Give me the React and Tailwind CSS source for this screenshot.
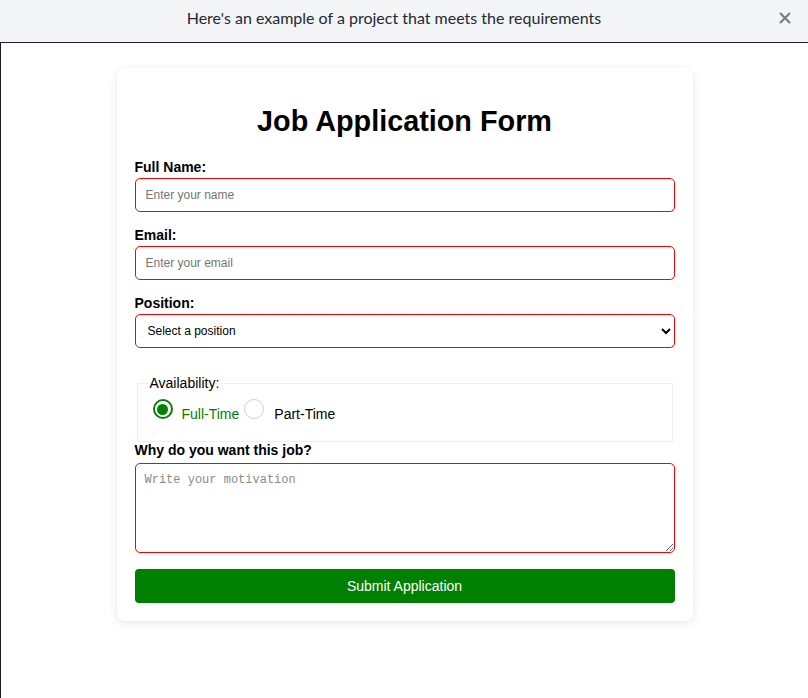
import { useState } from "react";

export default function App() {
  const [availability, setAvailability] = useState("full");

  return (
    <div className="min-h-[698px] bg-white font-['Liberation_Sans',Arial,sans-serif] text-black">
      {/* ── Banner ── */}
      <div className="relative flex h-[43px] items-center justify-center border-b border-[#1e1b3a] bg-[#f3f4f6] pb-[6px] pr-[20px] font-['Lato',sans-serif] text-[16px] text-[#1f2937]">
        Here's an example of a project that meets the requirements
        <button className="absolute right-[17px] top-[12px] h-[12px] w-[12px] text-[#7c7c8c]">
          <svg viewBox="0 0 12 12" className="h-[12px] w-[12px]" fill="none" stroke="currentColor" strokeWidth="2.2">
            <path d="M1 1 L11 11 M11 1 L1 11" />
          </svg>
        </button>
      </div>

      <div className="min-h-[655px] border-l border-[#1e1b3a] pt-[25px]">
        {/* ── Card ── */}
        <form
          className="mx-auto w-[576px] rounded-[8px] bg-white p-[18px] shadow-[0_2px_10px_rgba(0,0,0,0.1)]"
          onSubmit={(e) => e.preventDefault()}
        >
          <h1 className="mb-[20px] mt-[19px] text-center text-[28.8px] font-bold leading-[32px]">
            Job Application Form
          </h1>

          <label className="block text-[14px] font-bold leading-[21px]">Full Name:</label>
          <input
            type="text"
            placeholder="Enter your name"
            className="mb-[13px] block h-[34px] w-full rounded-[5px] border border-[#ff0000] px-[10px] text-[12px] outline-none placeholder:text-[#757575]"
          />

          <label className="block text-[14px] font-bold leading-[21px]">Email:</label>
          <input
            type="email"
            placeholder="Enter your email"
            className="mb-[13px] block h-[34px] w-full rounded-[5px] border border-[#ff0000] px-[10px] text-[12px] outline-none placeholder:text-[#757575]"
          />

          <label className="block text-[14px] font-bold leading-[21px]">Position:</label>
          <select className="block h-[34px] w-full rounded-[5px] border border-[#ff0000] pl-[8px] pr-[4px] text-[12px] outline-none">
            <option>Select a position</option>
            <option>Developer</option>
            <option>Designer</option>
          </select>

          {/* ── Availability ── */}
          <fieldset className="mx-[2px] mt-[27px] border border-[#eeeeee] pb-[19px] pl-[10px] pt-[4px]">
            <legend className="px-[2px] text-[14px] leading-[17px]">Availability:</legend>
            <div className="text-[14px] leading-[16px]">
              <label className="cursor-pointer" onClick={() => setAvailability("full")}>
                {availability === "full" ? (
                  <span className="ml-[5px] mr-[9px] mt-[3px] inline-block h-[20px] w-[20px] rounded-full border-[2px] border-[#0b7d0b] p-[2.5px]">
                    <span className="block h-full w-full rounded-full bg-[#008000]" />
                  </span>
                ) : (
                  <span className="ml-[5px] mr-[9px] mt-[3px] inline-block h-[20px] w-[20px] rounded-full border border-[#cfcfcf] bg-white" />
                )}
                <span className={availability === "full" ? "text-[#008000]" : "text-black"}>Full-Time</span>
              </label>
              <label className="cursor-pointer" onClick={() => setAvailability("part")}>
                {availability === "part" ? (
                  <span className="ml-[5px] mr-[10px] mt-[3px] inline-block h-[20px] w-[20px] rounded-full border-[2px] border-[#0b7d0b] p-[2.5px]">
                    <span className="block h-full w-full rounded-full bg-[#008000]" />
                  </span>
                ) : (
                  <span className="ml-[5px] mr-[10px] mt-[3px] inline-block h-[20px] w-[20px] rounded-full border border-[#cfcfcf] bg-white" />
                )}
                <span className={availability === "part" ? "text-[#008000]" : "text-black"}>Part-Time</span>
              </label>
            </div>
          </fieldset>

          <label className="mb-[4px] block text-[14px] font-bold leading-[17px]">Why do you want this job?</label>
          <textarea
            placeholder="Write your motivation"
            className="block h-[90px] w-full rounded-[5px] border border-[#ff0000] px-[9px] pt-[9px] font-['Liberation_Mono',monospace] text-[12px] leading-[14px] outline-none placeholder:text-[#8a8a8a]"
          />

          <button
            type="submit"
            className="mt-[16px] block h-[34px] w-full rounded-[4px] bg-[#008000] text-[14px] text-white"
          >
            Submit Application
          </button>
        </form>
      </div>
    </div>
  );
}
